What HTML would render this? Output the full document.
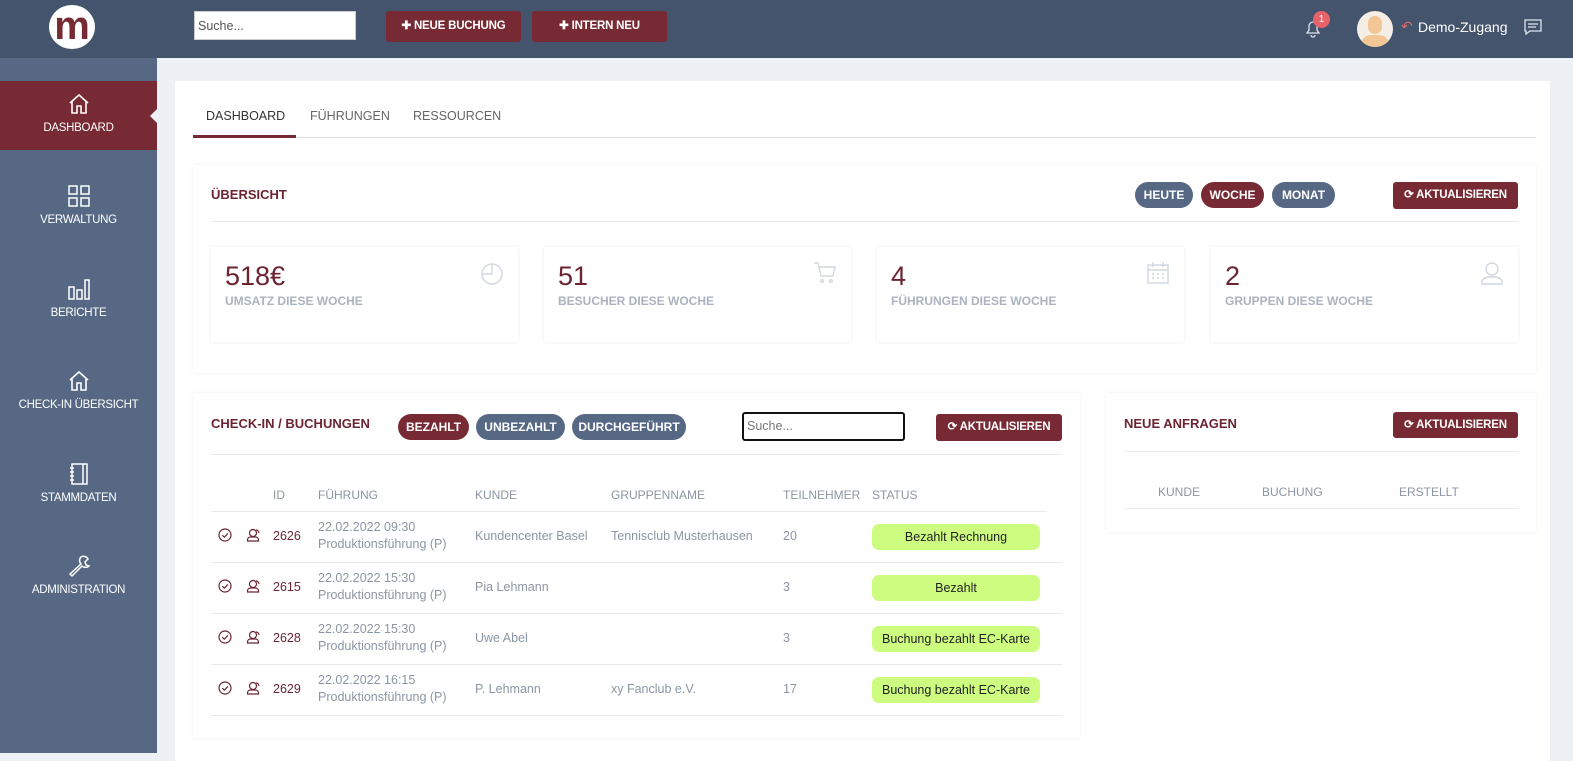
<!DOCTYPE html>
<html><head><meta charset="utf-8"><style>
*{box-sizing:border-box;margin:0;padding:0}
body{width:1573px;height:753px;overflow:hidden;background:#edf0f4;font-family:"Liberation Sans",sans-serif;position:relative}
.a{position:absolute}
.hdr{left:0;top:0;width:1573px;height:58px;background:#44546d}
.side{left:0;top:58px;width:157px;height:695px;background:#566884}
.nav{position:absolute;left:0;width:157px;text-align:center;color:#fff;font-size:11.5px;letter-spacing:-0.3px}
.nav svg{display:block;margin:0 auto 6px}
.btn{position:absolute;background:#772a33;color:#fff;font-weight:bold;font-size:11.5px;border-radius:3px;text-align:center;letter-spacing:-0.2px}
.pill{position:absolute;height:26px;line-height:26px;border-radius:13px;color:#fff;font-weight:bold;font-size:12px;text-align:center;background:#566884}
.card{position:absolute;background:#fff;box-shadow:0 0 4px rgba(0,0,0,0.06)}
.ttl{position:absolute;color:#6b2430;font-weight:bold;font-size:13px}
.line{position:absolute;height:1px;background:#e8eaee}
.stat{position:absolute;width:307px;height:95px;background:#fff;box-shadow:0 0 4px rgba(0,0,0,0.08)}
.stat .n{position:absolute;left:14px;top:14px;font-size:27px;color:#6b2430}
.stat .l{position:absolute;left:14px;top:47px;font-size:12px;font-weight:bold;color:#aab3bf}
.stat svg{position:absolute;right:14px;top:14px}
.th{position:absolute;top:488px;font-size:12px;color:#8c96a3}
.td{position:absolute;font-size:12.5px;color:#8c96a3;line-height:17px}
.st{position:absolute;left:872px;width:168px;height:26px;line-height:26px;border-radius:7px;background:#cdfc81;color:#222;font-size:12.5px;text-align:center}
.ic{position:absolute}
</style></head><body>
<div class="a hdr"></div>
<div class="a" style="left:49px;top:5px;width:46px;height:44px;border-radius:50%;background:#fff"></div>
<div class="a" style="left:49px;top:4px;width:46px;text-align:center;color:#772a33;font-size:40px;font-weight:bold;line-height:44px">m</div>
<div class="a" style="left:194px;top:11px;width:162px;height:29px;background:#fff;border:1px solid #ccc;font-size:12.5px;color:#555;padding:7px 3px">Suche...</div>
<div class="btn" style="left:386px;top:11px;width:135px;height:31px;line-height:31px">✚ NEUE BUCHUNG</div>
<div class="btn" style="left:532px;top:11px;width:135px;height:31px;line-height:31px">✚ INTERN NEU</div>
<svg class="a" style="left:1303px;top:18px" width="20" height="20" viewBox="0 0 20 20"><path d="M4 15h12l-2-3V8a4 4 0 0 0-8 0v4z M8 17a2 2 0 0 0 4 0" fill="none" stroke="#dde3ea" stroke-width="1.3"/></svg>
<div class="a" style="left:1313px;top:11px;width:17px;height:17px;border-radius:50%;background:#e8626a;color:#fff;font-size:10px;text-align:center;line-height:17px">1</div>
<div class="a" style="left:1357px;top:11px;width:36px;height:36px;border-radius:50%;background:#f4eee6;overflow:hidden"><div class="a" style="left:11px;top:5px;width:14px;height:18px;border-radius:7px;background:#f2c795"></div><div class="a" style="left:4px;top:24px;width:28px;height:20px;border-radius:12px;background:#f2c795"></div></div>
<div class="a" style="left:1401px;top:18px;color:#e06a6a;font-size:14px">↶</div>
<div class="a" style="left:1418px;top:19px;color:#fff;font-size:14px">Demo-Zugang</div>
<svg class="a" style="left:1523px;top:18px" width="20" height="18" viewBox="0 0 20 18"><path d="M2 2h16v11H7l-4 3v-3H2z M5 6h10 M5 9h8" fill="none" stroke="#dde3ea" stroke-width="1.3"/></svg>

<div class="a side"></div>
<div class="a" style="left:0;top:81px;width:157px;height:69px;background:#772a33"></div>
<div class="a" style="left:150px;top:108px;width:0;height:0;border-top:8px solid transparent;border-bottom:8px solid transparent;border-right:8px solid #edf0f4"></div>
<div class="nav" style="top:92px"><svg width="24" height="24" viewBox="0 0 24 24"><path d="M3 11L12 3l9 8 M5 9v12h5v-7h4v7h5V9" fill="none" stroke="#fff" stroke-width="1.6"/></svg>DASHBOARD</div>
<div class="nav" style="top:184px"><svg width="24" height="24" viewBox="0 0 24 24" fill="none" stroke="#fff" stroke-width="1.5"><rect x="2" y="2" width="8" height="8"/><rect x="14" y="2" width="8" height="8"/><rect x="2" y="14" width="8" height="8"/><rect x="14" y="14" width="8" height="8"/></svg>VERWALTUNG</div>
<div class="nav" style="top:277px"><svg width="24" height="24" viewBox="0 0 24 24" fill="none" stroke="#fff" stroke-width="1.5"><rect x="2" y="10" width="5" height="12"/><rect x="10" y="13" width="5" height="9"/><rect x="18" y="3" width="4" height="19"/></svg>BERICHTE</div>
<div class="nav" style="top:369px"><svg width="24" height="24" viewBox="0 0 24 24"><path d="M3 11L12 3l9 8 M5 9v12h5v-7h4v7h5V9" fill="none" stroke="#fff" stroke-width="1.6"/></svg>CHECK-IN ÜBERSICHT</div>
<div class="nav" style="top:462px"><svg width="24" height="24" viewBox="0 0 24 24" fill="none" stroke="#fff" stroke-width="1.5"><rect x="5" y="2" width="15" height="20"/><path d="M3 6h4M3 10h4M3 14h4M3 18h4M16 2v20"/></svg>STAMMDATEN</div>
<div class="nav" style="top:554px"><svg width="24" height="24" viewBox="0 0 24 24" fill="none" stroke="#fff" stroke-width="1.5"><path d="M14 3a5 5 0 0 0 0 7L3 20l2 2 10-10a5 5 0 0 0 7 0l-3-1-1-3 3-3a5 5 0 0 0-7-2z"/></svg>ADMINISTRATION</div>

<div class="card" style="left:175px;top:81px;width:1375px;height:680px;box-shadow:none"></div>
<div class="a" style="left:206px;top:109px;font-size:12.5px;color:#333">DASHBOARD</div>
<div class="a" style="left:310px;top:109px;font-size:12.5px;color:#666">FÜHRUNGEN</div>
<div class="a" style="left:413px;top:109px;font-size:12.5px;color:#666">RESSOURCEN</div>
<div class="line" style="left:193px;top:137px;width:1343px;background:#ddd"></div>
<div class="a" style="left:193px;top:135px;width:103px;height:3px;background:#772a33"></div>

<div class="card" style="left:193px;top:165px;width:1343px;height:208px"></div>
<div class="ttl" style="left:211px;top:187px">ÜBERSICHT</div>
<div class="pill" style="left:1135px;top:182px;width:58px">HEUTE</div>
<div class="pill" style="left:1201px;top:182px;width:63px;background:#772a33">WOCHE</div>
<div class="pill" style="left:1272px;top:182px;width:63px">MONAT</div>
<div class="btn" style="left:1393px;top:182px;width:125px;height:27px;line-height:27px">⟳ AKTUALISIEREN</div>
<div class="line" style="left:211px;top:221px;width:1307px"></div>
<div class="stat" style="left:211px;top:247px"><div class="n">518€</div><div class="l">UMSATZ DIESE WOCHE</div><svg width="24" height="24" viewBox="0 0 24 24" fill="none" stroke="#d0d7e0" stroke-width="1.4"><circle cx="12" cy="13" r="10"/><path d="M12 3v10H2"/></svg></div>
<div class="stat" style="left:544px;top:247px"><div class="n">51</div><div class="l">BESUCHER DIESE WOCHE</div><svg width="24" height="24" viewBox="0 0 24 24" fill="none" stroke="#d0d7e0" stroke-width="1.4"><path d="M1 2h4l3 13h12l2-9H6"/><circle cx="9" cy="20" r="1.3"/><circle cx="18" cy="20" r="1.3"/></svg></div>
<div class="stat" style="left:877px;top:247px"><div class="n">4</div><div class="l">FÜHRUNGEN DIESE WOCHE</div><svg width="24" height="24" viewBox="0 0 24 24" fill="none" stroke="#d0d7e0" stroke-width="1.4"><rect x="2" y="4" width="20" height="18"/><path d="M2 9h20M7 1v5M17 1v5M6 13h2M11 13h2M16 13h2M6 17h2M11 17h2M16 17h2"/></svg></div>
<div class="stat" style="left:1211px;top:247px"><div class="n">2</div><div class="l">GRUPPEN DIESE WOCHE</div><svg width="24" height="24" viewBox="0 0 24 24" fill="none" stroke="#d0d7e0" stroke-width="1.4"><circle cx="12" cy="8" r="6"/><path d="M2 23v-2a7 5 0 0 1 6-5h8a7 5 0 0 1 6 5v2z"/></svg></div>

<div class="card" style="left:193px;top:393px;width:887px;height:345px"></div>
<div class="ttl" style="left:211px;top:416px">CHECK-IN / BUCHUNGEN</div>
<div class="pill" style="left:398px;top:414px;width:71px;background:#772a33">BEZAHLT</div>
<div class="pill" style="left:476px;top:414px;width:89px">UNBEZAHLT</div>
<div class="pill" style="left:572px;top:414px;width:114px">DURCHGEFÜHRT</div>
<div class="a" style="left:742px;top:412px;width:163px;height:29px;border:2px solid #111;border-radius:3px;font-size:12.5px;color:#777;padding:5px 3px">Suche...</div>
<div class="btn" style="left:936px;top:414px;width:126px;height:27px;line-height:27px">⟳ AKTUALISIEREN</div>
<div class="line" style="left:211px;top:454px;width:851px"></div>
<div class="th" style="left:273px">ID</div><div class="th" style="left:318px">FÜHRUNG</div><div class="th" style="left:475px">KUNDE</div><div class="th" style="left:611px">GRUPPENNAME</div><div class="th" style="left:783px">TEILNEHMER</div><div class="th" style="left:872px">STATUS</div>
<div class="line" style="left:211px;top:511px;width:836px"></div>
<div class="line" style="left:211px;top:562px;width:851px"></div>
<div class="line" style="left:211px;top:613px;width:851px"></div>
<div class="line" style="left:211px;top:664px;width:851px"></div>
<div class="line" style="left:211px;top:715px;width:851px"></div>

<svg width="0" height="0" style="position:absolute"><defs>
<g id="chk"><circle cx="7" cy="7" r="6" fill="none" stroke="#6b2430" stroke-width="1.2"/><path d="M4.3 7.2l2 2 3.6-3.8" fill="none" stroke="#6b2430" stroke-width="1.2"/></g>
<g id="usr" fill="none" stroke="#6b2430" stroke-width="1.2"><circle cx="7" cy="5" r="3.5"/><path d="M1.5 13v-1.5a3 3 0 0 1 3-2.5h5a3 3 0 0 1 3 2.5V13z"/><path d="M10 2a3 3 0 0 1 3 3"/></g>
</defs></svg>

<svg class="ic" style="left:218px;top:528px" width="14" height="14"><use href="#chk"/></svg><svg class="ic" style="left:246px;top:528px" width="14" height="14"><use href="#usr"/></svg>
<div class="td" style="left:273px;top:528px;color:#6b2430">2626</div>
<div class="td" style="left:318px;top:519px">22.02.2022 09:30<br>Produktionsführung (P)</div>
<div class="td" style="left:475px;top:528px">Kundencenter Basel</div>
<div class="td" style="left:611px;top:528px">Tennisclub Musterhausen</div>
<div class="td" style="left:783px;top:528px">20</div>
<div class="st" style="top:524px">Bezahlt Rechnung</div>

<svg class="ic" style="left:218px;top:579px" width="14" height="14"><use href="#chk"/></svg><svg class="ic" style="left:246px;top:579px" width="14" height="14"><use href="#usr"/></svg>
<div class="td" style="left:273px;top:579px;color:#6b2430">2615</div>
<div class="td" style="left:318px;top:570px">22.02.2022 15:30<br>Produktionsführung (P)</div>
<div class="td" style="left:475px;top:579px">Pia Lehmann</div>
<div class="td" style="left:783px;top:579px">3</div>
<div class="st" style="top:575px">Bezahlt</div>

<svg class="ic" style="left:218px;top:630px" width="14" height="14"><use href="#chk"/></svg><svg class="ic" style="left:246px;top:630px" width="14" height="14"><use href="#usr"/></svg>
<div class="td" style="left:273px;top:630px;color:#6b2430">2628</div>
<div class="td" style="left:318px;top:621px">22.02.2022 15:30<br>Produktionsführung (P)</div>
<div class="td" style="left:475px;top:630px">Uwe Abel</div>
<div class="td" style="left:783px;top:630px">3</div>
<div class="st" style="top:626px">Buchung bezahlt EC-Karte</div>

<svg class="ic" style="left:218px;top:681px" width="14" height="14"><use href="#chk"/></svg><svg class="ic" style="left:246px;top:681px" width="14" height="14"><use href="#usr"/></svg>
<div class="td" style="left:273px;top:681px;color:#6b2430">2629</div>
<div class="td" style="left:318px;top:672px">22.02.2022 16:15<br>Produktionsführung (P)</div>
<div class="td" style="left:475px;top:681px">P. Lehmann</div>
<div class="td" style="left:611px;top:681px">xy Fanclub e.V.</div>
<div class="td" style="left:783px;top:681px">17</div>
<div class="st" style="top:677px">Buchung bezahlt EC-Karte</div>

<div class="card" style="left:1106px;top:393px;width:430px;height:139px"></div>
<div class="ttl" style="left:1124px;top:416px">NEUE ANFRAGEN</div>
<div class="btn" style="left:1393px;top:412px;width:125px;height:26px;line-height:26px">⟳ AKTUALISIEREN</div>
<div class="line" style="left:1124px;top:451px;width:394px"></div>
<div class="th" style="left:1158px;top:485px">KUNDE</div><div class="th" style="left:1262px;top:485px">BUCHUNG</div><div class="th" style="left:1399px;top:485px">ERSTELLT</div>
<div class="line" style="left:1124px;top:508px;width:394px"></div>
</body></html>
